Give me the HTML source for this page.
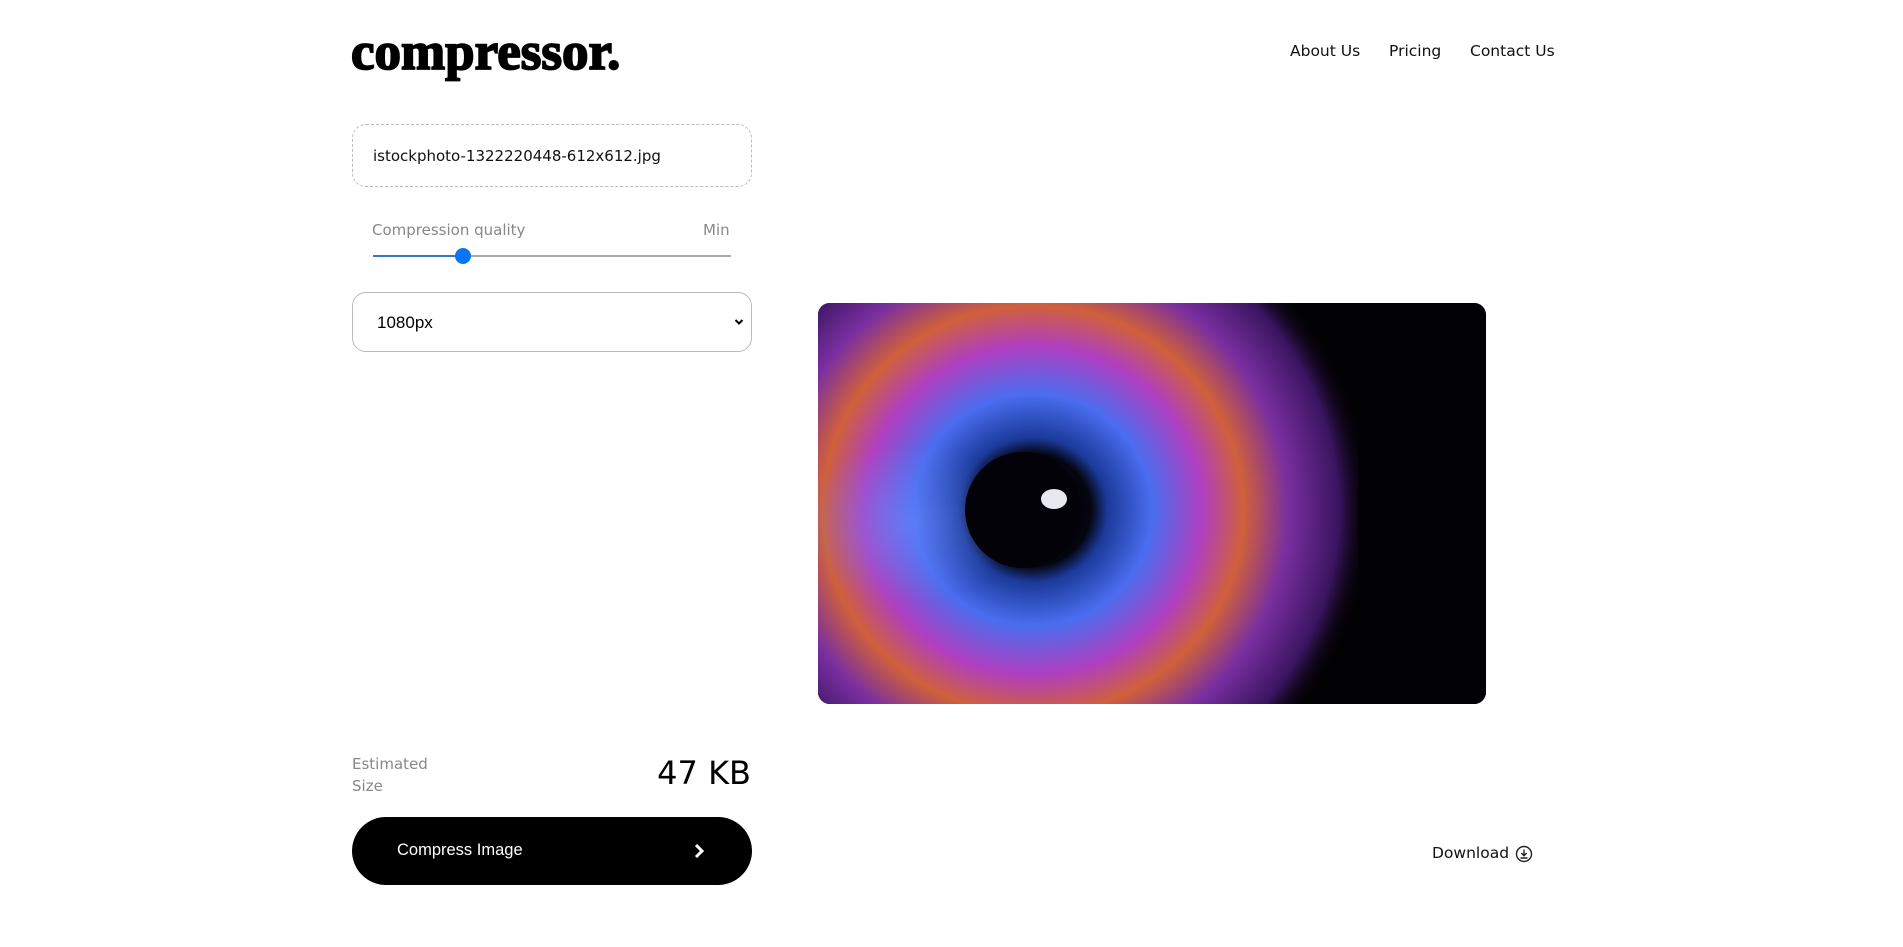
<!DOCTYPE html>
<html><head><meta charset="utf-8"><style>
*{margin:0;padding:0;box-sizing:border-box}
body{width:1903px;height:947px;background:#fff;position:relative;font-family:"Liberation Sans",sans-serif;overflow:hidden}
.a{position:absolute}
.logo{left:351px;top:22px;font-family:"Liberation Serif",serif;font-weight:900;font-size:53px;letter-spacing:0px;color:#000;-webkit-text-stroke:1.8px #000}
.nav{top:42px;font-family:"DejaVu Sans","Liberation Sans",sans-serif;font-size:15.5px;color:#111}
.file{left:352px;top:124px;width:400px;height:63px;border:1px dashed #bbb;border-radius:14px;font-family:"DejaVu Sans",sans-serif;font-size:15px;color:#111;padding:22px 0 0 20px}
.lbl{top:221px;font-family:"DejaVu Sans",sans-serif;font-size:15px;color:#888}
.sel{left:352px;top:292px;width:400px;height:60px;border:1px solid #bbb;border-radius:14px;font-size:17px;color:#000;padding:20px 0 0 24px}
.img{left:818px;top:303px;width:668px;height:401px;border-radius:12px;overflow:hidden;background:#020103}
.btn{left:352px;top:817px;width:400px;height:68px;background:#000;border-radius:34px;color:#fff;font-size:16.5px;padding:24px 0 0 45px}
</style></head><body>
<div class="a logo">compressor.</div>
<div class="a nav" style="left:1290px">About Us</div>
<div class="a nav" style="left:1389px">Pricing</div>
<div class="a nav" style="left:1470px">Contact Us</div>
<div class="a file">istockphoto-1322220448-612x612.jpg</div>
<div class="a lbl" style="left:372px">Compression quality</div>
<div class="a lbl" style="left:703px">Min</div>
<div class="a" style="left:373px;top:255px;width:90px;height:2px;background:#3575c8"></div>
<div class="a" style="left:463px;top:255px;width:268px;height:2px;background:#aaa"></div>
<div class="a" style="left:455px;top:248px;width:16px;height:16px;border-radius:50%;background:#0a76f6"></div>
<div class="a sel">1080px</div>
<svg class="a" style="left:734px;top:318px" width="10" height="8" viewBox="0 0 10 8"><path d="M1.5 2 L5 5.5 L8.5 2" fill="none" stroke="#000" stroke-width="2"/></svg>
<div class="a img">
<svg width="668" height="401" viewBox="0 0 668 401">
<defs>
<radialGradient id="g" cx="0.5" cy="0.5" r="0.5">
<stop offset="0" stop-color="#000"/>
<stop offset="0.17" stop-color="#050510"/>
<stop offset="0.22" stop-color="#1b3a9a"/>
<stop offset="0.35" stop-color="#4a6df0"/>
<stop offset="0.5" stop-color="#b03fc0"/>
<stop offset="0.62" stop-color="#d0603a"/>
<stop offset="0.75" stop-color="#7a2fa0"/>
<stop offset="0.9" stop-color="#3a1460"/>
<stop offset="1" stop-color="#020103" stop-opacity="0"/>
</radialGradient>
<radialGradient id="h" cx="0.5" cy="0.5" r="0.5">
<stop offset="0" stop-color="#6a8cff" stop-opacity="0.5"/>
<stop offset="1" stop-color="#6a8cff" stop-opacity="0"/>
</radialGradient>
</defs>
<rect width="668" height="401" fill="#020103"/>
<ellipse cx="215" cy="207" rx="340" ry="330" fill="url(#g)"/>
<ellipse cx="90" cy="220" rx="110" ry="80" fill="url(#h)"/>
<rect x="540" y="0" width="128" height="401" fill="#020103"/>
<circle cx="205" cy="207" r="58" fill="#030208"/>
<ellipse cx="236" cy="196" rx="13" ry="10" fill="#e8e8f0"/>
</svg>
</div>
<div class="a" style="left:352px;top:753px;font-family:'DejaVu Sans',sans-serif;font-size:15px;line-height:22px;color:#888">Estimated<br>Size</div>
<div class="a" style="right:1152px;top:754px;font-family:'DejaVu Sans',sans-serif;font-size:32px;color:#000">47 KB</div>
<div class="a btn">Compress Image</div>
<svg class="a" style="left:693px;top:843px" width="12" height="16" viewBox="0 0 12 16"><path d="M3 2 L9 8 L3 14" fill="none" stroke="#fff" stroke-width="3"/></svg>
<div class="a" style="left:1432px;top:844px;font-family:'DejaVu Sans',sans-serif;font-size:15.5px;color:#111">Download</div>
<svg class="a" style="left:1515px;top:845px" width="18" height="18" viewBox="0 0 18 18"><circle cx="9" cy="9" r="7.5" fill="none" stroke="#222" stroke-width="1.4"/><path d="M9 4.5 V10.5 M6.3 8 L9 10.7 L11.7 8 M5.5 13 H12.5" fill="none" stroke="#222" stroke-width="1.4"/></svg>
</body></html>
